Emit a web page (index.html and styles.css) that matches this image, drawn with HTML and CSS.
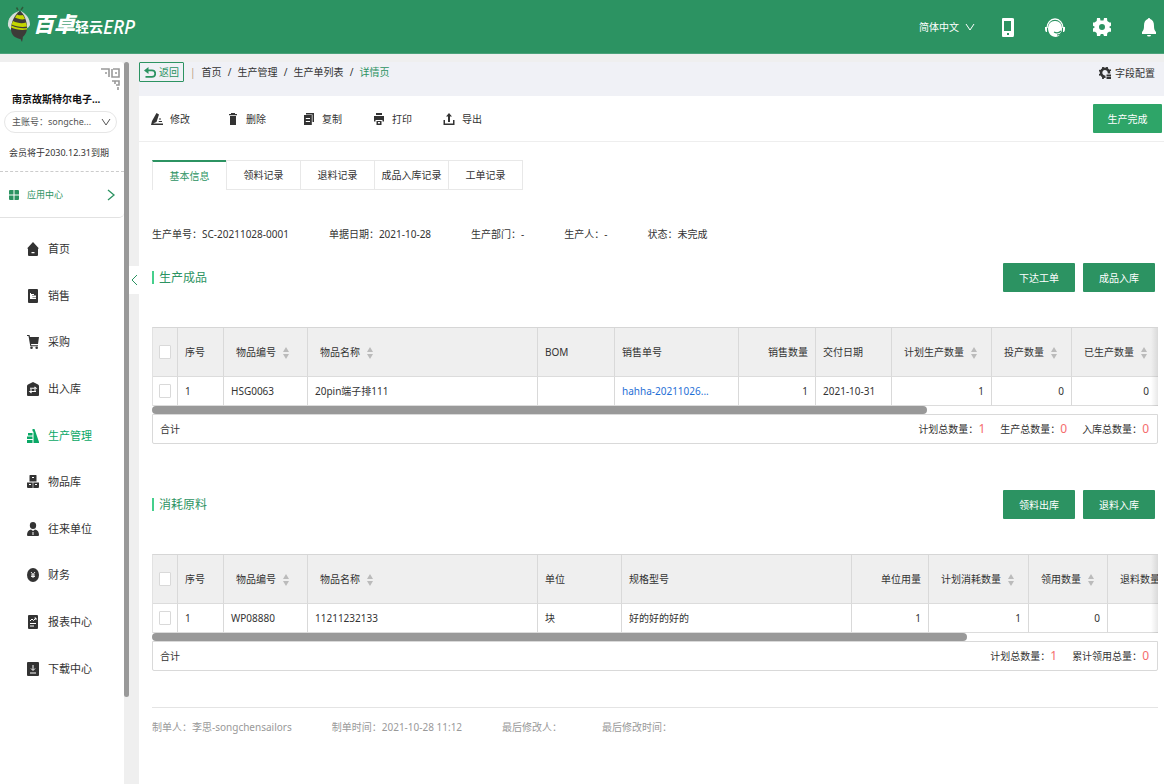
FILE: index.html
```html
<!DOCTYPE html>
<html lang="zh-CN">
<head>
<meta charset="utf-8">
<meta name="viewport" content="width=device-width, initial-scale=1">
<title>百卓轻云ERP - 生产单详情</title>
<link rel="stylesheet" href="styles.css">
</head>
<body>
<svg class="sprite" aria-hidden="true">
  <symbol id="sort" viewBox="0 0 8 12"><path d="M4 0 7 5H1zM4 12 1 7h6z"/></symbol>
  <symbol id="down" viewBox="0 0 10 10"><path d="M1 2 5 8 9 2" fill="none" stroke="currentColor"/></symbol>
</svg>

<header class="topbar">
  <a class="logo" href="#">
    <svg class="bee" viewBox="0 0 24 36" aria-hidden="true">
      <path d="M11 4 9.500 1.500M14 4l2-3" stroke="#2f5a3a" stroke-width="1.500"/>
      <path d="M12 5C6 7 0 12 1 20c1 2 2 3 3 4 4-3 7-10 8-19z" fill="#d5ded9"/>
      <path d="M14 5c5 3 9 7 9 14-1 2-2 3-3 3-4-3-6-9-6-17z" fill="#d5ded9"/>
      <path d="M13 5c4 3 7 9 7 17 0 6-4 9-7 11-5-1-9-4-9-10C4 16 8 8 13 5z" fill="#3d3b38"/>
      <path d="M10 8.500c2 1 4 1 6 .5l2 4c-3 1-7 0-10-1.500zM6 15c4 2 9 3 13 1.500l1 4c-5 1-11 0-15.500-2z" fill="#c3d600"/>
      <path d="M4.500 19.500c5 2.500 10 3 15.500 2.500v1.500c-6 1-11 0-16-2z" fill="#c3d600"/>
      <path d="m13 32 2 4 1-5z" fill="#3d3b38"/>
    </svg>
    <strong>百卓</strong><span class="logo-sub">轻云</span><span class="logo-erp">ERP</span>
  </a>
  <div class="top-actions">
    <button class="language" type="button">简体中文 <svg class="i10"><use href="#down"/></svg></button>
    <button type="button" aria-label="手机版"><svg class="i20" viewBox="0 0 20 20"><path fill-rule="evenodd" d="M5 1h9q2 0 2 1v16q0 2-1 2H5q-1 0-1-1V2q0-1 1-1zm1 3v10h7V4zm3 12v2h2v-2z"/></svg></button>
    <button type="button" aria-label="客服"><svg class="i20" viewBox="0 0 20 20"><path d="M2 11a8 9 0 0 1 16 0" fill="none" stroke="currentColor" stroke-width="1.300"/><path d="M0 10h2v5H1q-1-1-1-3zm20 0h-2v5h1q1-1 1-3z"/><path d="M10 4a6.500 6.500 0 0 0-7 7c0 5 3 9 8 9 4-1 6-4 6-9a6.500 6.500 0 0 0-7-7z"/><path d="M9 15c2 1 5 1 7-1M17 15c-1 2-3 3-5 3" fill="none" stroke="#2c9362" stroke-width="1.200"/></svg></button>
    <button type="button" aria-label="设置"><svg class="i20" viewBox="0 0 20 20"><path fill-rule="evenodd" d="M8.500 3.500 8 1H5L4.700 4 2.500 5.500 1 5.500v3.200L3 10l-2 1.500v3.200h2l1.700 1.300L5 19h3l.8-2h2.400l.8 2h3l.3-3 1.700-1.300h2v-3.200L17 10l2-1.300V5.500h-1.500L15.300 4 15 1h-3l-.5 2.500zM10 7a3 3 0 1 1 0 6 3 3 0 0 1 0-6z"/></svg></button>
    <button type="button" aria-label="通知"><svg class="i20" viewBox="0 0 20 20"><path d="M10 1q1 0 1.200 1C14 3 15 5.500 15 9c0 3 .5 4.500 2 6v2H3v-2c1.500-1.500 2-3 2-6 0-3.500 1-6 3.800-7Q9 1 10 1zM8 18h4q0 1.500-2 1.500T8 18z"/></svg></button>
  </div>
</header>

<div class="layout">
  <aside class="sidebar">
    <div class="account">
      <svg class="qr" viewBox="0 0 19 22" aria-hidden="true"><path d="M0 1h8v8M12 1h6v8h-7V1M4 5h2M14 5h2M11 13h3v3M14 13h4v4h-3M17 19v3" fill="none" stroke="currentColor" stroke-width="1.600"/></svg>
      <h2>南京故斯特尔电子...</h2>
      <button class="account-pill" type="button"><span>主账号：songche...</span><svg class="i10"><use href="#down"/></svg></button>
      <p>会员将于2030.12.31到期</p>
    </div>
    <a class="app-center" href="#">
      <svg class="i10" viewBox="0 0 10 10"><path d="M1 0h3.500v4.500H0V1q0-1 1-1zm4.500 0H9q1 0 1 1v3.500H5.500zM0 5.500h4.500V10H1q-1 0-1-1zm5.500 0H10V9q0 1-1 1H5.500z"/></svg>
      <span>应用中心</span>
      <svg class="i10 next" viewBox="0 0 10 10"><path d="m2 0 6 5-6 5" fill="none" stroke="currentColor" stroke-width="1.300"/></svg>
    </a>
    <nav class="menu">
      <a href="#"><svg viewBox="0 0 12 14"><path fill-rule="evenodd" d="M6 0 12 6.500h-1V13q0 1-1 1H2q-1 0-1-1V6.500H0zM4.500 10v1.200h3V10z"/></svg>首页</a>
      <a href="#"><svg viewBox="0 0 12 14"><path fill-rule="evenodd" d="M2 0h8q1 0 1 1v12q0 1-1 1H2q-1 0-1-1V1q0-1 1-1zm1 4v6h6V8.500H5.500V8H9V6.500H5V6h2V5H4V4z"/></svg>销售</a>
      <a href="#"><svg viewBox="0 0 12 14"><path d="M0 0h2.500l.5 2h9l-1 7H4l.3 1.200H11v1H3.300L1.500 1H0z"/><circle cx="4.500" cy="12.700" r="1.300"/><circle cx="9.700" cy="12.700" r="1.300"/></svg>采购</a>
      <a href="#"><svg viewBox="0 0 12 14"><path d="M6 0 11 2.500q1 .5 1 1.500v9q0 1-1 1H1q-1 0-1-1V4q0-1 1-1.500z"/><path d="M3 6.200h6L7.500 4.800M9 9.500H3l1.500 1.500M7 8h2M3 8h2" fill="none" stroke="#fff" stroke-width="1.100"/></svg>出入库</a>
      <a class="active" href="#"><svg viewBox="0 0 12 14"><path d="M5.500 0h2L12 13v1H6.500V3l-1-1zM1 4h4.500v2.500H1zM0 7.500h5.500V10H0zM0 11h5.500v3H0z"/></svg>生产管理</a>
      <a href="#"><svg viewBox="0 0 12 14"><path fill-rule="evenodd" d="M3 0h6q.5 0 .5.500V6.500h-7V.5Q2.500 0 3 0zM0 7.500h5.700V13H1q-1 0-1-1zm6.300 0H12V12q0 1-1 1H6.300zM5 2v1h2V2zM2 9v1h2V9zm6 0v1h2V9z"/></svg>物品库</a>
      <a href="#"><svg viewBox="0 0 12 14"><path fill-rule="evenodd" d="M6 0a3 3.300 0 1 1 0 7 3 3.300 0 0 1 0-7zM4 7.500 6 9l2-1.500c3 .5 4 3 4 5.500q0 1-1 1H1q-1 0-1-1c0-2.500 1-5 4-5.500zM5.500 10v3h1v-3z"/></svg>往来单位</a>
      <a href="#"><svg viewBox="0 0 12 14"><ellipse cx="6" cy="7" rx="6" ry="7"/><path d="m4 4 2 2.500L8 4M6 6.500V10M4 7h4M4 8.500h4" fill="none" stroke="#fff" stroke-width=".9"/></svg>财务</a>
      <a href="#"><svg viewBox="0 0 12 14"><rect x="1" width="10" height="14" rx="1"/><path d="m3 6 2-2 1.500 1.500L9 3M7.500 3H9v2M3 8.500h6M3 11h4" fill="none" stroke="#fff"/></svg>报表中心</a>
      <a href="#"><svg viewBox="0 0 12 14"><rect width="12" height="14" rx="1"/><path d="M6 3v5M4 6.500l2 2 2-2M3 11h6" fill="none" stroke="#fff"/></svg>下载中心</a>
    </nav>
  </aside>
  <div class="side-track"><div class="side-thumb"></div></div>
  <div class="gutter"><button type="button" aria-label="收起菜单"><svg class="i10" viewBox="0 0 10 10"><path d="M8 0 3 5l5 5" fill="none" stroke="currentColor"/></svg></button></div>

  <main class="main">
    <div class="crumb-bar">
      <button class="back" type="button"><svg viewBox="0 0 12 11"><path d="M0 3.500 4.500 0v2.500H8a4 4 0 0 1 0 8.200H1.500V9H8a2.300 2.300 0 0 0 0-4.700H4.500V7z"/></svg>返回</button>
      <i class="bar">|</i>
      <nav class="crumbs"><a href="#">首页</a><span>/</span><a href="#">生产管理</a><span>/</span><a href="#">生产单列表</a><span>/</span><b>详情页</b></nav>
      <button class="config" type="button"><svg class="i12" viewBox="0 0 12 12"><path d="M10 6.500V5.500A4 4 0 1 0 6.500 9.700" fill="none" stroke="currentColor" stroke-width="2.600"/><path d="M4 0v2M8 0v2M0 3.500l2 .5M0 8l2-.5M4 10v2M10 3.500l2-.5M7.500 8.500H12M7.500 11H12" stroke="currentColor" stroke-width="1.800"/></svg>字段配置</button>
    </div>

    <div class="toolbar">
      <button class="wide" type="button"><svg class="i12" viewBox="0 0 12 12"><path d="M5.500 0 8 1.500 5.500 9 2 10.500H12V12H0l1-4zM8 5.500h2v1H8zM8 8h3v1H7.500z"/></svg>修改</button>
      <button class="wide" type="button"><svg class="i12" viewBox="0 0 12 12"><path d="M4 0h4v1h2v1.300H2V1h2zM3 3h6v9H3z"/></svg>删除</button>
      <button type="button"><svg class="i12" viewBox="0 0 12 12"><path fill-rule="evenodd" d="M3 0h8v9h-1.500V1.500H3zM1 2h7.800v10H1zm1.800 3v1H7V5zm0 3v1H7V8z"/></svg>复制</button>
      <button type="button"><svg class="i12" viewBox="0 0 12 12"><path fill-rule="evenodd" d="M3 0h6v2H3zM1 3h10v5.500H9.500V7h-7v1.500H1zM3.500 8h5v4h-5zM5 9v1.500h2V9z"/></svg>打印</button>
      <button type="button"><svg class="i12" viewBox="0 0 12 12"><path d="m6 0 3 3.500H7V9H5V3.500H3zM.5 7H2v3.500h8V7h1.500v5H.5z"/></svg>导出</button>
      <button class="btn finish" type="button">生产完成</button>
    </div>

    <div class="content">
      <div class="tabs" role="tablist">
        <button class="on" type="button" role="tab" aria-selected="true">基本信息</button>
        <button type="button" role="tab">领料记录</button>
        <button type="button" role="tab">退料记录</button>
        <button type="button" role="tab">成品入库记录</button>
        <button type="button" role="tab">工单记录</button>
      </div>

      <div class="facts">
        <span>生产单号：SC-20211028-0001</span><span>单据日期：2021-10-28</span><span>生产部门：-</span><span>生产人：-</span><span>状态：未完成</span>
      </div>

      <section class="block">
        <div class="block-head">
          <h3>生产成品</h3>
          <button class="btn" type="button">下达工单</button>
          <button class="btn" type="button">成品入库</button>
        </div>
        <div class="grid">
          <div class="grid-view">
            <table class="t-product">
              <colgroup><col class="w25"><col class="w46"><col class="w84"><col class="w230"><col class="w77"><col class="w124"><col class="w77"><col class="w76"><col class="w100"><col class="w80"><col></colgroup>
              <thead><tr>
                <th><input type="checkbox" aria-label="全选生产成品"></th><th>序号</th>
                <th class="sortable">物品编号<svg><use href="#sort"/></svg></th>
                <th class="sortable">物品名称<svg><use href="#sort"/></svg></th>
                <th>BOM</th><th>销售单号</th><th class="num">销售数量</th><th>交付日期</th>
                <th class="sortable">计划生产数量<svg><use href="#sort"/></svg></th>
                <th class="sortable">投产数量<svg><use href="#sort"/></svg></th>
                <th class="sortable">已生产数量<svg><use href="#sort"/></svg></th>
              </tr></thead>
              <tbody><tr>
                <td><input type="checkbox" aria-label="选择 HSG0063"></td><td>1</td><td>HSG0063</td><td>20pin端子排111</td><td></td>
                <td><a href="#">hahha-20211026...</a></td><td class="num">1</td><td>2021-10-31</td><td class="num">1</td><td class="num">0</td><td class="num">0</td>
              </tr></tbody>
            </table>
          </div>
          <div class="scroll"><div class="thumb" style="width:77%"></div></div>
          <div class="total"><span class="sum">合计</span><span>计划总数量：<em>1</em></span><span>生产总数量：<em>0</em></span><span>入库总数量：<em>0</em></span></div>
        </div>
      </section>

      <section class="block">
        <div class="block-head">
          <h3>消耗原料</h3>
          <button class="btn" type="button">领料出库</button>
          <button class="btn" type="button">退料入库</button>
        </div>
        <div class="grid">
          <div class="grid-view">
            <table class="t-material">
              <colgroup><col class="w25"><col class="w46"><col class="w84"><col class="w230"><col class="w84"><col class="w230"><col class="w77"><col class="w100"><col class="w79"><col></colgroup>
              <thead><tr>
                <th><input type="checkbox" aria-label="全选消耗原料"></th><th>序号</th>
                <th class="sortable">物品编号<svg><use href="#sort"/></svg></th>
                <th class="sortable">物品名称<svg><use href="#sort"/></svg></th>
                <th>单位</th><th>规格型号</th><th class="num">单位用量</th>
                <th class="sortable">计划消耗数量<svg><use href="#sort"/></svg></th>
                <th class="sortable">领用数量<svg><use href="#sort"/></svg></th>
                <th class="sortable">退料数量<svg><use href="#sort"/></svg></th>
              </tr></thead>
              <tbody><tr>
                <td><input type="checkbox" aria-label="选择 WP08880"></td><td>1</td><td>WP08880</td><td>11211232133</td><td>块</td><td>好的好的好的</td>
                <td class="num">1</td><td class="num">1</td><td class="num">0</td><td></td>
              </tr></tbody>
            </table>
          </div>
          <div class="scroll"><div class="thumb" style="width:81%"></div></div>
          <div class="total"><span class="sum">合计</span><span>计划总数量：<em>1</em></span><span>累计领用总量：<em>0</em></span></div>
        </div>
      </section>

      <footer class="meta"><span>制单人：李思-songchensailors</span><span>制单时间：2021-10-28 11:12</span><span>最后修改人：</span><span>最后修改时间：</span></footer>
    </div>
  </main>
</div>
</body>
</html>
```
FILE: styles.css
```css
* { box-sizing: border-box; }
body {
  margin: 0;
  min-height: 100vh;
  display: flex;
  flex-direction: column;
  background: #efefef;
  color: #333;
  font: 10px/16px "Noto Sans", "Noto Sans CJK SC", sans-serif;
  overflow-x: hidden;
}
button { border: 0; background: none; padding: 0; color: inherit; font: inherit; cursor: pointer; }
a { color: inherit; text-decoration: none; }
h2, h3, p { margin: 0; }
svg { fill: currentColor; flex: none; }
.sprite { position: absolute; width: 0; height: 0; }
.i10 { width: 10px; height: 10px; }
.i12 { width: 12px; height: 12px; }
.i20 { width: 20px; height: 20px; display: block; }

/* Top bar */
.topbar {
  height: 54px;
  display: flex;
  align-items: center;
  justify-content: space-between;
  padding: 0 5px 0 7px;
  background: #2c9362;
  border-bottom: 1px solid #4ba27a;
  color: #fff;
}
.logo { display: flex; align-items: center; line-height: 36px; padding-bottom: 6px; }
.bee { width: 24px; height: 36px; margin-right: 2px; }
.logo strong { font-size: 21px; font-weight: 900; font-style: italic; }
.logo-sub { font-size: 14px; font-weight: 700; padding-top: 6px; }
.logo-erp { font-size: 19px; font-weight: 500; font-style: italic; padding-top: 6px; }
.top-actions { display: flex; align-items: center; gap: 27px; }
.language { display: flex; align-items: center; gap: 6px; margin-right: -4px; }

/* Frame */
.layout { flex: 1; display: flex; padding-top: 8px; }
.sidebar { width: 124px; flex: none; background: #fff; border-top-right-radius: 4px; }
.side-track { width: 5px; flex: none; }
.side-thumb { height: 635px; border-radius: 3px; background: #999; }
.gutter { width: 10px; flex: none; padding-top: 204px; }
.gutter button { width: 10px; height: 28px; display: flex; align-items: center; justify-content: center; background: #fff; color: #2c9362; }
.main { flex: 1; min-width: 0; background: #fff; }

/* Sidebar */
.account { position: relative; padding: 28px 4px 10px; border-bottom: 1px dashed #ccc; }
.qr { position: absolute; top: 6px; right: 4px; width: 19px; height: 22px; color: #999; }
.account h2 { padding-left: 8px; font-size: 10px; line-height: 18px; color: #111; }
.account-pill {
  width: 113px;
  height: 22px;
  display: flex;
  align-items: center;
  justify-content: space-between;
  margin-top: 3px;
  padding: 0 5px 0 7px;
  border: 1px solid #e6e6e6;
  border-radius: 11px;
  font-size: 9px;
  color: #555;
}
.account p { padding: 12px 0 0 5px; font-size: 9px; }
.app-center {
  height: 46px;
  display: flex;
  align-items: center;
  gap: 8px;
  padding: 0 8px 0 9px;
  border-bottom: 1px solid #e2e2e2;
  border-bottom-right-radius: 5px;
  color: #2c9362;
  font-size: 9px;
}
.next { margin-left: auto; height: 12px; }
.menu { height: 466px; margin-top: 8px; display: grid; grid-auto-rows: 1fr; font-size: 11px; }
.menu a { display: flex; align-items: center; gap: 9px; padding-left: 27px; }
.menu svg { width: 12px; height: 14px; }
.menu .active { color: #0aa866; }

/* Breadcrumb bar */
.crumb-bar { height: 34px; display: flex; align-items: flex-start; padding-right: 9px; background: #f0f1f6; }
.back {
  width: 45px;
  height: 20px;
  display: flex;
  align-items: center;
  justify-content: center;
  gap: 3px;
  border: 1px solid #2c9362;
  border-radius: 1px;
  color: #2c9362;
}
.back svg { width: 12px; height: 11px; }
.bar { margin: 2px 6px 0; font-style: normal; color: #b89f7e; }
.crumbs { display: flex; padding-top: 2px; }
.crumbs span { width: 16px; text-align: center; }
.crumbs b { font-weight: 400; color: #2c9362; }
.config { display: flex; align-items: center; gap: 4px; margin: 3px 0 0 auto; }

/* Toolbar */
.toolbar { height: 46px; display: flex; align-items: center; gap: 31px; padding: 0 2px 0 12px; border-bottom: 1px solid #eee; }
.toolbar button { display: flex; align-items: center; gap: 7px; }
.toolbar .wide { margin-right: 6px; }
.btn { width: 72px; height: 29px; border-radius: 1px; background: #2c9362; color: #fff; }
.toolbar .finish { width: 69px; justify-content: center; margin-left: auto; background: #2ea568; }

/* Content */
.content { padding: 18px 6px 0 13px; }
.tabs { display: flex; }
.tabs button { width: 75px; height: 30px; margin-right: -1px; border: 1px solid #e8e8e8; }
.tabs .on { border-top: 2px solid #2c9362; border-bottom: 0; color: #2c9362; }
.facts { display: flex; gap: 40px; padding-top: 36px; }
.block { padding-top: 21px; }
.block + .block { padding-top: 46px; }
.block-head { display: flex; align-items: center; gap: 8px; padding-right: 3px; }
.block-head h3 {
  margin-right: auto;
  padding-left: 5px;
  border-left: 2px solid #45cf8c;
  font-size: 12px;
  line-height: 13px;
  font-weight: 400;
  color: #2c9362;
}

/* Data grids */
.grid { margin-top: 35px; }
.grid-view { position: relative; overflow: hidden; border-top: 1px solid #d6d6d6; border-left: 1px solid #e2e2e2; }
.grid-view::after {
  content: "";
  position: absolute;
  inset: 0 0 0 auto;
  width: 7px;
  background: linear-gradient(to right, transparent, rgba(0, 0, 0, .09));
}
table { table-layout: fixed; border-collapse: separate; border-spacing: 0; }
.t-product { width: 100%; min-width: 1006px; }
.t-material { width: 102%; min-width: 1036px; }
.w25 { width: 25px; }
.w46 { width: 46px; }
.w76 { width: 76px; }
.w77 { width: 77px; }
.w79 { width: 79px; }
.w80 { width: 80px; }
.w84 { width: 84px; }
.w100 { width: 100px; }
.w124 { width: 124px; }
.w230 { width: 230px; }
th, td { padding: 0 7px; border-right: 1px solid #d9d9d9; border-bottom: 1px solid #dcdcdc; text-align: left; font-weight: 400; white-space: nowrap; }
th { height: 49px; background: #efefef; }
td { height: 29px; }
th:first-child, td:first-child { padding: 0 6px; }
th:last-child, td:last-child { border-right: 0; }
.sortable { padding-left: 12px; }
.sortable svg { width: 8px; height: 12px; margin-left: 6px; vertical-align: -3px; color: #bbb; }
.num { text-align: right; }
.num:last-child { padding-right: 10px; }
td a { color: #1f6fd6; }
input[type="checkbox"] {
  appearance: none;
  display: block;
  width: 12px;
  height: 14px;
  margin: 0;
  border: 1px solid #d9d9d9;
  border-radius: 1px;
  background: #fff;
}
input[type="checkbox"]:checked { background: #2c9362; }
.scroll { height: 8px; }
.thumb { height: 8px; border-radius: 4px; background: #999; }
.total { height: 30px; display: flex; align-items: center; gap: 15px; padding: 0 8px 0 7px; border: 1px solid #d9d9d9; border-radius: 0 0 2px 2px; }
.sum { margin-right: auto; }
.total em { font-style: normal; font-size: 12px; color: #f56c6c; }

.meta { display: flex; gap: 40px; margin-top: 36px; padding-top: 11px; border-top: 1px solid #e4e4e4; color: #999; }
```
